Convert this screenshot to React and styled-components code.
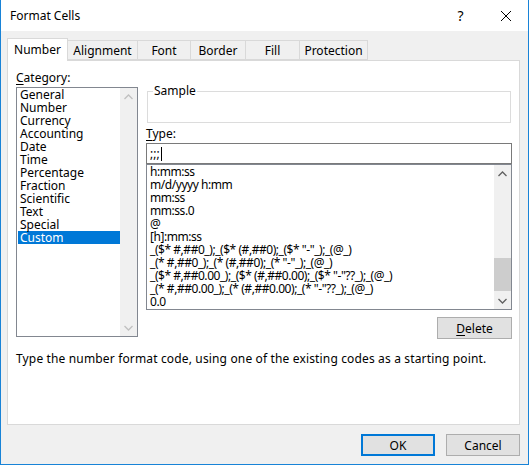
import React from 'react'
import styled, { createGlobalStyle } from 'styled-components'

const GlobalStyle = createGlobalStyle`
  html, body {
    margin: 0;
    padding: 0;
    background: #ffffff;
  }
  body {
    font-family: "Noto Sans", "Open Sans", sans-serif;
    font-size: 12px;
    color: #000000;
  }
  * {
    box-sizing: border-box;
  }
`

const Window = styled.div`
  width: 529px;
  height: 465px;
  display: flex;
  flex-direction: column;
  background: #f0f0f0;
  border: 1px solid #1883d7;
  border-top: none;
`
const TitleBar = styled.div`
  height: 31px;
  flex: none;
  display: flex;
  align-items: center;
  background: #ffffff;
  padding-left: 9px;
`
const Title = styled.div`
  flex: 1;
  font-size: 12px;
`
const TitleButton = styled.div`
  width: 45px;
  height: 31px;
  display: flex;
  align-items: center;
  justify-content: center;
  font-size: 14px;
  color: #000;
`
const Body = styled.div`
  flex: 1;
  display: flex;
  flex-direction: column;
  padding: 7px 8px 0 6px;
`
const TabRow = styled.div`
  display: flex;
  align-items: flex-end;
  height: 22px;
  position: relative;
  z-index: 1;
`
const Tab = styled.div`
  width: ${({ w }) => w}px;
  height: ${({ active }) => (active ? 23 : 20)}px;
  margin-left: ${({ first }) => (first ? 0 : -1)}px;
  margin-bottom: ${({ active }) => (active ? -1 : 0)}px;
  display: flex;
  align-items: center;
  justify-content: center;
  padding-bottom: ${({ active }) => (active ? 2 : 0)}px;
  background: ${({ active }) => (active ? '#ffffff' : '#f0f0f0')};
  border: 1px solid #d9d9d9;
  border-bottom: ${({ active }) => (active ? 'none' : '1px solid #d9d9d9')};
  z-index: ${({ active }) => (active ? 2 : 1)};
`
const Panel = styled.div`
  height: 365px;
  background: #ffffff;
  border: 1px solid #d9d9d9;
  padding: 9px 6px 0 8px;
  display: flex;
  flex-direction: column;
`
const Columns = styled.div`
  display: grid;
  grid-template-columns: 122px 366px;
  column-gap: 8px;
`
const Column = styled.div`
  display: flex;
  flex-direction: column;
`
const Label = styled.div`
  height: 16px;
  line-height: 16px;
  margin-top: ${({ top }) => top || 0}px;
  margin-bottom: ${({ gap }) => gap}px;
  u {
    text-decoration: underline;
    text-underline-offset: 2px;
  }
`
const ListBox = styled.div`
  height: ${({ h }) => h}px;
  border: 1px solid #828790;
  background: #ffffff;
  display: flex;
`
const Items = styled.div`
  flex: 1;
  padding-left: 1px;
  overflow: hidden;
`
const Item = styled.div`
  height: 13px;
  line-height: 13px;
  padding-left: 2px;
  white-space: nowrap;
  letter-spacing: ${({ tight }) => (tight ? '-0.45px' : 'normal')};
  background: ${({ selected }) => (selected ? '#0078d7' : 'transparent')};
  color: ${({ selected }) => (selected ? '#ffffff' : '#000000')};
`
const ScrollBar = styled.div`
  width: 17px;
  flex: none;
  background: #f0f0f0;
  display: flex;
  flex-direction: column;
`
const Arrow = styled.div`
  height: 17px;
  display: flex;
  align-items: center;
  justify-content: center;
`
const Track = styled.div`
  flex: 1;
  display: flex;
  flex-direction: column;
  justify-content: flex-end;
`
const Thumb = styled.div`
  height: 33px;
  margin-bottom: 1px;
  background: #cdcdcd;
`
const GroupBox = styled.fieldset`
  margin: 14px 0 0 1px;
  width: 364px;
  height: 39px;
  border: 1px solid #dcdcdc;
  padding: 0;
  legend {
    margin-left: 5px;
    padding: 0 1px;
    line-height: 14px;
  }
`
const TypeInput = styled.div`
  height: 21px;
  border: 1px solid #7a7a7a;
  display: flex;
  align-items: center;
  padding-left: 3px;
  background: #ffffff;
`
const Caret = styled.span`
  display: inline-block;
  width: 1px;
  height: 14px;
  background: #000;
  margin-left: 1px;
`
const DeleteRow = styled.div`
  display: flex;
  justify-content: flex-end;
  margin-top: 7px;
`
const Button = styled.div`
  width: ${({ w }) => w || 74}px;
  height: 22px;
  display: flex;
  align-items: center;
  justify-content: center;
  background: #e1e1e1;
  border: ${({ primary }) => (primary ? '2px solid #0078d7' : '1px solid #adadad')};
  u {
    text-decoration: underline;
    text-underline-offset: 2px;
  }
`
const Hint = styled.div`
  margin-top: 12px;
  line-height: 16px;
  letter-spacing: 0.15px;
`
const Footer = styled.div`
  display: flex;
  justify-content: flex-end;
  gap: 11px;
  margin-top: 9px;
`

const Chevron = ({ up, color }) => (
  <svg width="9" height="6" viewBox="0 0 9 6">
    <path
      d={up ? 'M0.5 5 L4.5 1 L8.5 5' : 'M0.5 1 L4.5 5 L8.5 1'}
      fill="none"
      stroke={color}
      strokeWidth="1.3"
    />
  </svg>
)

const categories = [
  'General',
  'Number',
  'Currency',
  'Accounting',
  'Date',
  'Time',
  'Percentage',
  'Fraction',
  'Scientific',
  'Text',
  'Special',
  'Custom',
]

const formats = [
  'h:mm:ss',
  'm/d/yyyy h:mm',
  'mm:ss',
  'mm:ss.0',
  '@',
  '[h]:mm:ss',
  '_($* #,##0_);_($* (#,##0);_($* "-"_);_(@_)',
  '_(* #,##0_);_(* (#,##0);_(* "-"_);_(@_)',
  '_($* #,##0.00_);_($* (#,##0.00);_($* "-"??_);_(@_)',
  '_(* #,##0.00_);_(* (#,##0.00);_(* "-"??_);_(@_)',
  '0.0',
]

const tabs = [
  ['Number', 61],
  ['Alignment', 71],
  ['Font', 54],
  ['Border', 56],
  ['Fill', 55],
  ['Protection', 69],
]

const App = () => {
  return (
    <>
      <GlobalStyle />
      <Window>
        <TitleBar>
          <Title>Format Cells</Title>
          <TitleButton>?</TitleButton>
          <TitleButton>
            <svg width="12" height="12" viewBox="0 0 12 12">
              <path d="M1 1 L11 11 M11 1 L1 11" stroke="#000" strokeWidth="1" />
            </svg>
          </TitleButton>
        </TitleBar>
        <Body>
          <TabRow>
            {tabs.map(([name, w], i) => (
              <Tab key={name} w={w} first={i === 0} active={i === 0}>
                {name}
              </Tab>
            ))}
          </TabRow>
          <Panel>
            <Columns>
              <Column>
                <Label gap={1}>
                  <u>C</u>ategory:
                </Label>
                <ListBox h={250}>
                  <Items>
                    {categories.map((c) => (
                      <Item key={c} selected={c === 'Custom'}>
                        {c}
                      </Item>
                    ))}
                  </Items>
                  <ScrollBar>
                    <Arrow>
                      <Chevron up color="#c0c0c0" />
                    </Arrow>
                    <Track />
                    <Arrow>
                      <Chevron color="#c0c0c0" />
                    </Arrow>
                  </ScrollBar>
                </ListBox>
              </Column>
              <Column>
                <GroupBox>
                  <legend>Sample</legend>
                </GroupBox>
                <Label top={3} gap={1}>
                  <u>T</u>ype:
                </Label>
                <TypeInput>
                  ;;;<Caret />
                </TypeInput>
                <ListBox h={146}>
                  <Items>
                    {formats.map((f) => (
                      <Item key={f} tight>
                        {f}
                      </Item>
                    ))}
                  </Items>
                  <ScrollBar>
                    <Arrow>
                      <Chevron up color="#606060" />
                    </Arrow>
                    <Track>
                      <Thumb />
                    </Track>
                    <Arrow>
                      <Chevron color="#606060" />
                    </Arrow>
                  </ScrollBar>
                </ListBox>
                <DeleteRow>
                  <Button w={75}>
                    <u>D</u>elete
                  </Button>
                </DeleteRow>
              </Column>
            </Columns>
            <Hint>
              Type the number format code, using one of the existing codes as a starting point.
            </Hint>
          </Panel>
          <Footer>
            <Button primary>OK</Button>
            <Button>Cancel</Button>
          </Footer>
        </Body>
      </Window>
    </>
  )
}

export default App
